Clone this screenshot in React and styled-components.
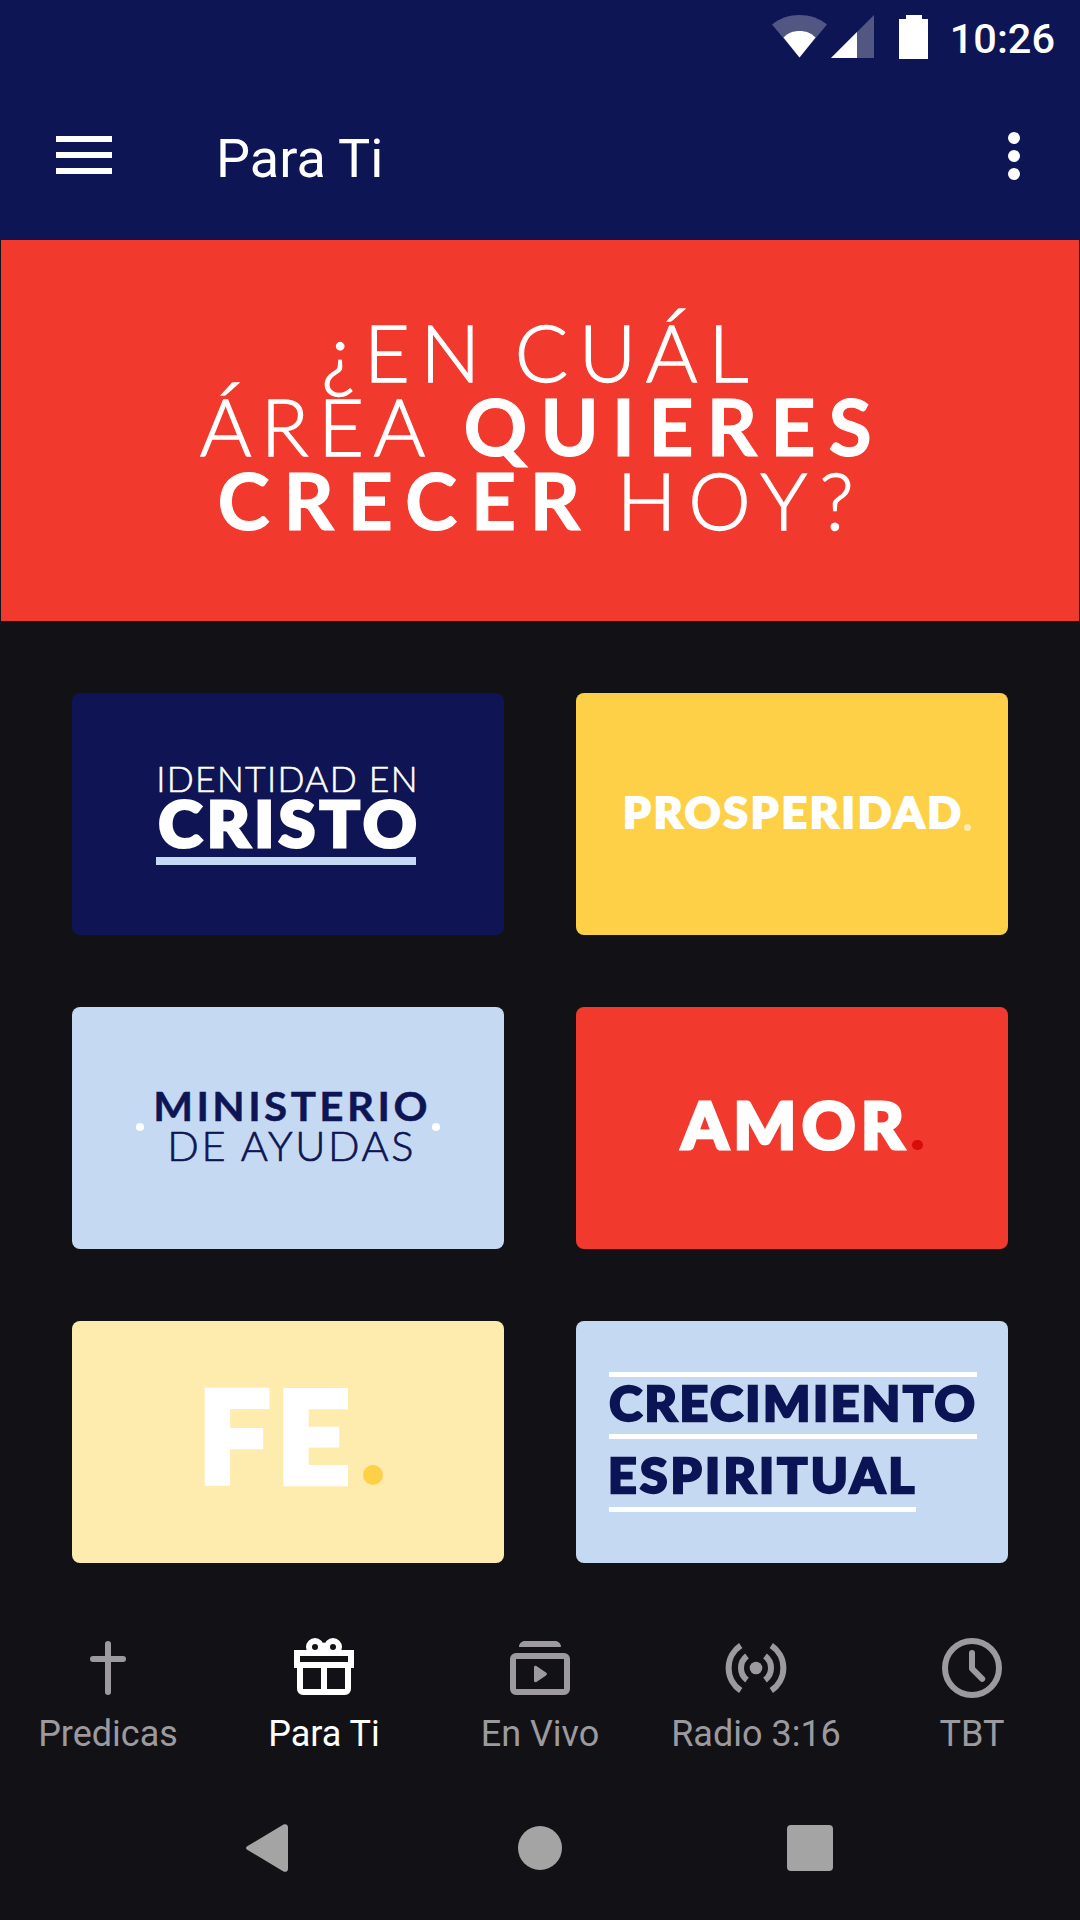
import React, { useLayoutEffect, useState } from 'react';
import styled, { createGlobalStyle } from 'styled-components';

const NAVY = '#0e1554';
const RED = '#f1392d';
const YELLOW = '#fed048';
const LIGHT_BLUE = '#c6d9f2';
const CREAM = '#feebae';
const BACKGROUND = '#121216';
const TAB_GRAY = '#9c9a9f';
const NAV_GRAY = '#a4a4a4';
const LETTERING_FONT = 'Lato, sans-serif';

// Extra outline in em, per weight.
const STROKES = { 300: 0.016, 700: 0.012, 900: 0.05 };

const GlobalStyle = createGlobalStyle`
  * {
    box-sizing: border-box;
  }
  body {
    margin: 0;
    background-color: ${BACKGROUND};
    font-family: Roboto, sans-serif;
  }
`;

const Screen = styled.div`
  display: flex;
  flex-direction: column;
  width: 1080px;
  height: 1920px;
  overflow: hidden;
  background-color: ${BACKGROUND};
`;

const StatusBar = styled.div`
  display: flex;
  align-items: center;
  justify-content: flex-end;
  height: 72px;
  padding: 2px 25px 0 0;
  background-color: ${NAVY};
  color: #fff;
  svg {
    display: block;
  }
`;

const Clock = styled.time`
  margin-left: 22px;
  padding-top: 3px;
  font-size: 41.5px;
  font-weight: 500;
  line-height: 48px;
`;

const AppBar = styled.header`
  display: flex;
  align-items: center;
  height: 168px;
  padding: 0 60px 0 56px;
  background-color: ${NAVY};
  color: #fff;
`;

const MenuButton = styled.button`
  display: flex;
  flex-direction: column;
  gap: 10px;
  width: 56px;
  padding: 0;
  margin-top: -2px;
  border: none;
  background: none;
  span {
    height: 6px;
    background-color: #fff;
  }
`;

const Title = styled.h1`
  flex: 1;
  margin: 5px 0 0 104px;
  font-size: 54px;
  font-weight: 400;
  line-height: 64px;
`;

const MoreButton = styled.button`
  display: flex;
  flex-direction: column;
  gap: 6px;
  padding: 0;
  border: none;
  background: none;
  span {
    width: 12px;
    height: 12px;
    border-radius: 50%;
    background-color: #fff;
  }
`;

const Banner = styled.section`
  display: flex;
  flex-direction: column;
  gap: 17px;
  height: 381px;
  margin: 0 1px;
  padding-top: 85px;
  background-color: ${RED};
  color: #fff;
`;

const BannerLine = styled.div`
  display: flex;
  height: 57px;
  gap: ${props => props.$gap}px;
  padding-left: ${props => props.$start - 1}px;
`;

const CardGrid = styled.main`
  display: grid;
  grid-template-columns: 432px 432px;
  grid-auto-rows: 242px;
  gap: 72px;
  padding: 72px 72px 0;
`;

const Card = styled.article`
  display: flex;
  flex-direction: column;
  align-items: flex-start;
  padding: ${props => props.$top}px 0 0 ${props => props.$left}px;
  border-radius: 8px;
  background-color: ${props => props.$background};
  color: ${props => props.$color || '#fff'};
`;

const CardRow = styled.div`
  display: flex;
  align-items: ${props => props.$align || 'flex-end'};
  gap: ${props => props.$gap}px;
`;

const Stack = styled.div`
  display: flex;
  flex-direction: column;
  align-items: flex-start;
  gap: ${props => props.$gap}px;
`;

const Rule = styled.div`
  width: ${props => props.$width}px;
  height: ${props => props.$height || 5}px;
  margin: ${props => props.$margin || 0};
  background-color: ${props => props.$color || '#fff'};
`;

const Dot = styled.span`
  width: ${props => props.$size}px;
  height: ${props => props.$size}px;
  margin: ${props => props.$margin || 0};
  border-radius: 50%;
  background-color: ${props => props.$color || '#fff'};
`;

// The box is exactly as tall as the capitals with their outline.
const Line = styled.span`
  display: block;
  flex: none;
  width: ${props => props.$width}px;
  height: ${props => 0.72 + props.$stroke}em;
  padding-top: ${props => props.$stroke / 2}em;
  margin: ${props => props.$margin || 0};
  font-family: ${LETTERING_FONT};
  font-size: ${props => props.$size}px;
  font-weight: ${props => props.$weight};
  line-height: 0.69em;
  white-space: nowrap;
  transform: ${props => (props.$stretch === 1 ? 'none' : `scaleX(${props.$stretch})`)};
  transform-origin: left;
  -webkit-text-stroke: ${props => props.$stroke}em currentColor;
`;

const TabBar = styled.nav`
  display: grid;
  grid-template-columns: repeat(5, 216px);
  height: 213px;
  padding-top: 69px;
`;

const Tab = styled.a`
  display: flex;
  flex-direction: column;
  align-items: center;
  gap: 9px;
  color: ${props => (props.$active ? '#fff' : TAB_GRAY)};
  font-size: 36px;
  line-height: 42px;
`;

const NavigationBar = styled.footer`
  display: grid;
  grid-template-columns: repeat(3, 270px);
  justify-content: center;
  justify-items: center;
  align-items: center;
  height: 144px;
`;

const BackKey = styled.svg`
  margin-right: 6px;
`;

const HomeKey = styled.span`
  width: 44px;
  height: 44px;
  border-radius: 50%;
  background-color: ${NAV_GRAY};
`;

const RecentsKey = styled.span`
  width: 46px;
  height: 46px;
  border-radius: 4px;
  background-color: ${NAV_GRAY};
`;

const SignalSvg = styled.svg`
  margin-left: 3px;
`;

const BatterySvg = styled.svg`
  margin-left: 25px;
`;

// Tracks a word out so that its ink fills the given width.
function Lettering({ children, size, weight, width, margin, stretch = 1 }) {
  const [fit, setFit] = useState({ letterSpacing: 0, textIndent: 0 });
  const stroke = STROKES[weight];

  useLayoutEffect(() => {
    const context = document.createElement('canvas').getContext('2d');
    context.font = `${weight} ${size}px ${LETTERING_FONT}`;
    const box = context.measureText(children);
    const ink = box.actualBoundingBoxLeft + box.actualBoundingBoxRight + stroke * size;
    setFit({
      letterSpacing: (width / stretch - ink) / (children.length - 1),
      textIndent: box.actualBoundingBoxLeft + (stroke * size) / 2,
    });
  }, [children, size, weight, width, stroke, stretch]);

  return (
    <Line
      $size={size}
      $weight={weight}
      $width={width}
      $stroke={stroke}
      $stretch={stretch}
      $margin={margin}
      style={fit}
    >
      {children}
    </Line>
  );
}

function WifiIcon() {
  return (
    <svg width="56" height="44" viewBox="0 0 56 44">
      <path d="M0 9.500C8 3 17.500 0 27.500 0S47 3 55 9.500L27.500 42.500z" fill="#fff" opacity=".28" />
      <path d="M11.500 22.500C16 18 21 16 27.500 16s11.500 2 16 6.500l-16 20z" fill="#fff" />
    </svg>
  );
}

function SignalIcon() {
  return (
    <SignalSvg width="43" height="44" viewBox="0 0 43 44">
      <path d="M43 0v43H0z" fill="#fff" opacity=".28" />
      <path d="M26 17v26H0z" fill="#fff" />
    </SignalSvg>
  );
}

function BatteryIcon() {
  return (
    <BatterySvg width="29" height="44" viewBox="0 0 29 44">
      <path d="M7 0h16v4h6v40H0V4h7z" fill="#fff" />
    </BatterySvg>
  );
}

function TabIcon({ children }) {
  return (
    <svg width="72" height="72" viewBox="0 0 24 24" fill="none" stroke="currentColor" strokeWidth="2">
      {children}
    </svg>
  );
}

const tabs = [
  {
    label: 'Predicas',
    icon: <path d="M12 4v16M7 9h10" strokeLinecap="round" />,
  },
  {
    label: 'Para Ti',
    active: true,
    icon: (
      <>
        <circle cx="9" cy="5" r="2" />
        <circle cx="15" cy="5" r="2" />
        <path d="M3 7h18v4H3zM4 11v8a1 1 0 0 0 1 1h14a1 1 0 0 0 1-1v-8M12 11v9" />
        <path d="M10.500 4 12 3.500 13.500 4v3h-3z" fill="currentColor" stroke="none" />
      </>
    ),
  },
  {
    label: 'En Vivo',
    icon: (
      <>
        <rect x="3" y="8" width="18" height="12" rx="1" />
        <path
          d="M5 5c0-1.200.9-2 2-2h10c1.100 0 2 .8 2 2zM10 11.800c0-.5.4-.7.800-.5l3.200 2.200c.4.300.4.700 0 1l-3.200 2.200c-.4.200-.8 0-.8-.5z"
          fill="currentColor"
          stroke="none"
        />
      </>
    ),
  },
  {
    label: 'Radio 3:16',
    icon: (
      <>
        <circle cx="12" cy="12" r="2.100" fill="currentColor" stroke="none" />
        <path d="M9 8a5 5 0 0 0 0 8M15 8a5 5 0 0 1 0 8M6.900 4.500a9 9 0 0 0 0 15M17.100 4.500a9 9 0 0 1 0 15" />
      </>
    ),
  },
  {
    label: 'TBT',
    icon: (
      <>
        <circle cx="12" cy="12" r="9" />
        <path d="M12 7v5.200l3.400 3.400" strokeLinecap="round" strokeLinejoin="round" />
      </>
    ),
  },
];

function App() {
  return (
    <>
      <GlobalStyle />
      <Screen>
        <StatusBar>
          <WifiIcon />
          <SignalIcon />
          <BatteryIcon />
          <Clock>10:26</Clock>
        </StatusBar>
        <AppBar>
          <MenuButton aria-label="Menú">
            <span />
            <span />
            <span />
          </MenuButton>
          <Title>Para Ti</Title>
          <MoreButton aria-label="Más opciones">
            <span />
            <span />
            <span />
          </MoreButton>
        </AppBar>
        <Banner>
          <BannerLine $start={324} $gap={45}>
            <Lettering size={79} weight={300} width={149} margin="-1px 0 0">¿EN</Lettering>
            <Lettering size={79} weight={300} width={230} margin="-1px 0 0">CUÁL</Lettering>
          </BannerLine>
          <BannerLine $start={200} $gap={41}>
            <Lettering size={79} weight={300} width={225} margin="-1px 0 0">ÁREA</Lettering>
            <Lettering size={79} weight={700} width={404}>QUIERES</Lettering>
          </BannerLine>
          <BannerLine $start={220} $gap={43}>
            <Lettering size={79} weight={700} width={361}>CRECER</Lettering>
            <Lettering size={79} weight={300} width={227} margin="-1px 0 0">HOY?</Lettering>
          </BannerLine>
        </Banner>
        <CardGrid>
          <Card $background="#0f1454" $top={74} $left={84}>
            <Lettering size={35.500} weight={300} width={256} margin="0 0 6px 3px">IDENTIDAD EN</Lettering>
            <Lettering size={63} weight={900} width={257} stretch={1.05} margin="0 0 0 3px">CRISTO</Lettering>
            <Rule $width={260} $height={8} $margin="9px 0 0" $color={LIGHT_BLUE} />
          </Card>
          <Card $background={YELLOW} $top={104} $left={49}>
            <CardRow $gap={3}>
              <Lettering size={42} weight={900} width={336} stretch={1.05}>PROSPERIDAD</Lettering>
              <Dot $size={7} $margin="0 0 -2px" $color={CREAM} />
            </CardRow>
          </Card>
          <Card $background={LIGHT_BLUE} $color={NAVY} $top={85} $left={64}>
            <CardRow $gap={12} $align="center">
              <Dot $size={8} $margin="0 0 -1px" />
              <Stack $gap={9}>
                <Lettering size={40.500} weight={700} width={271} stretch={1.04}>MINISTERIO</Lettering>
                <Lettering size={41.500} weight={300} width={242} margin="0 0 0 15px">DE AYUDAS</Lettering>
              </Stack>
              <Dot $size={8} $margin="0 0 -1px -7px" />
            </CardRow>
          </Card>
          <Card $background={RED} $top={94} $left={103}>
            <CardRow $gap={6}>
              <Lettering size={64} weight={900} width={227} stretch={1.03}>AMOR</Lettering>
              <Dot $size={10.500} $color="#d90c0c" />
            </CardRow>
          </Card>
          <Card $background={CREAM} $top={67} $left={132}>
            <CardRow $gap={15}>
              <Lettering size={126.500} weight={900} width={145}>FE</Lettering>
              <Dot $size={20} $margin="0 0 0 -1px" $color={YELLOW} />
            </CardRow>
          </Card>
          <Card $background={LIGHT_BLUE} $color="#0b1454" $top={51} $left={33}>
            <Rule $width={368} />
            <Lettering size={47} weight={900} width={366} stretch={1.06} margin="9px 0 12px">CRECIMIENTO</Lettering>
            <Rule $width={368} />
            <Lettering size={47} weight={900} width={305} stretch={1.06} margin="19px 0 13px 1px">ESPIRITUAL</Lettering>
            <Rule $width={307} />
          </Card>
        </CardGrid>
        <TabBar>
          {tabs.map(tab => (
            <Tab key={tab.label} $active={tab.active}>
              <TabIcon>{tab.icon}</TabIcon>
              {tab.label}
            </Tab>
          ))}
        </TabBar>
        <NavigationBar>
          <BackKey width="42" height="48" viewBox="0 0 42 48">
            <path
              d="M1.200 22.300 37.500.6C39.500-.5 42 .5 42 3v42c0 2.500-2.500 3.500-4.500 2.400L1.200 25.700c-1.600-1-1.600-2.400 0-3.400z"
              fill={NAV_GRAY}
            />
          </BackKey>
          <HomeKey />
          <RecentsKey />
        </NavigationBar>
      </Screen>
    </>
  );
}

export default App;
